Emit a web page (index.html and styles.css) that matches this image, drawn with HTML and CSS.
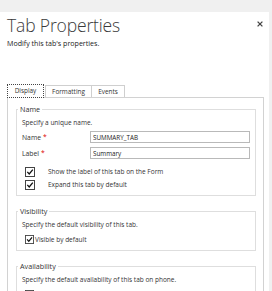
FILE: index.html
```html
<!DOCTYPE html>
<html lang="en">
<head>
<meta charset="utf-8">
<title>Tab Properties</title>
<link rel="stylesheet" href="styles.css">
</head>
<body>
<div class="topbar"></div>
<div class="main">
  <div class="dialog">
    <div class="header">
      <div class="titles">
        <h1 class="title">Tab Properties</h1>
        <p class="subtitle">Modify this tab's properties.</p>
      </div>
      <svg class="close" viewBox="0 0 6 6" width="6" height="6" aria-label="Close">
        <path d="M0.6 0.6 L5.4 5.4 M5.4 0.6 L0.6 5.4" stroke="#444" stroke-width="1.3" fill="none"/>
      </svg>
    </div>
    <div class="tabs">
      <div class="tab active">Display</div>
      <div class="tab formatting">Formatting</div>
      <div class="tab events">Events</div>
    </div>
    <div class="panel">
      <fieldset class="group">
        <legend>Name</legend>
        <p class="hint">Specify a unique name.</p>
        <div class="field">
          <label class="field-label">Name<span class="req">*</span></label>
          <input class="text-input" type="text" value="SUMMARY_TAB">
        </div>
        <div class="field field-second">
          <label class="field-label">Label<span class="req">*</span></label>
          <input class="text-input" type="text" value="Summary">
        </div>
        <div class="check-row check-first">
          <svg class="checkbox" viewBox="0 0 10 10" width="10" height="10"><rect x="0.5" y="0.5" width="9" height="9" fill="#fff" stroke="#444"/><path d="M2.3 4.9 L4.2 7 L7.8 2.6" stroke="#111" stroke-width="1.3" fill="none"/></svg>
          <span>Show the label of this tab on the Form</span>
        </div>
        <div class="check-row">
          <svg class="checkbox" viewBox="0 0 10 10" width="10" height="10"><rect x="0.5" y="0.5" width="9" height="9" fill="#fff" stroke="#444"/><path d="M2.3 4.9 L4.2 7 L7.8 2.6" stroke="#111" stroke-width="1.3" fill="none"/></svg>
          <span>Expand this tab by default</span>
        </div>
      </fieldset>
      <fieldset class="group">
        <legend>Visibility</legend>
        <p class="hint">Specify the default visibility of this tab.</p>
        <div class="check-row check-tight">
          <svg class="checkbox small" viewBox="0 0 10 10" width="9" height="9"><rect x="0.5" y="0.5" width="9" height="9" fill="#fff" stroke="#444"/><path d="M2.3 4.9 L4.2 7 L7.8 2.6" stroke="#111" stroke-width="1.4" fill="none"/></svg>
          <span>Visible by default</span>
        </div>
      </fieldset>
      <fieldset class="group">
        <legend>Availability</legend>
        <p class="hint">Specify the default availability of this tab on phone.</p>
        <div class="check-row check-tight">
          <svg class="checkbox small" viewBox="0 0 10 10" width="9" height="9"><rect x="0.5" y="0.5" width="9" height="9" fill="#fff" stroke="#444"/><path d="M2.3 4.9 L4.2 7 L7.8 2.6" stroke="#111" stroke-width="1.4" fill="none"/></svg>
          <span>Available on phone</span>
        </div>
      </fieldset>
    </div>
  </div>
  <div class="scroll-strip"></div>
</div>
</body>
</html>
```
FILE: styles.css
```css
* { box-sizing: border-box; }

html, body {
  margin: 0;
  padding: 0;
}

body {
  width: 272px;
  height: 291px;
  overflow: hidden;
  background: #f0f0f0;
  font-family: "Open Sans", "Noto Sans", sans-serif;
  color: #262626;
}

.topbar {
  height: 12px;
  background: #f0f0f0;
}

.main {
  display: flex;
  height: 279px;
}

.dialog {
  width: 269px;
  background: #fff;
  overflow: hidden;
}

.scroll-strip {
  flex: 1;
  background: #f0f0f0;
}

.header {
  display: flex;
  justify-content: space-between;
  align-items: flex-start;
  padding: 3px 0 0 7px;
}

.title {
  margin: 0;
  font-size: 17.5px;
  font-weight: 300;
  line-height: 20px;
  letter-spacing: -0.15px;
  color: #3a3a3a;
}

.subtitle {
  margin: 4px 0 0;
  font-size: 7.1px;
  line-height: 9px;
  color: #222;
}

.close {
  display: block;
  margin: 6px 6px 0 0;
}

.tabs {
  display: flex;
  align-items: flex-end;
  margin-top: 36px;
  padding-left: 7px;
  height: 13px;
}

.tab {
  height: 12px;
  border: 1px solid #cfcfcf;
  border-bottom: none;
  font-size: 6.4px;
  line-height: 11px;
  text-align: center;
  color: #333;
  background: #fff;
}

.tab.active {
  position: relative;
  width: 37px;
  height: 14px;
  margin-bottom: -1px;
  margin-right: 1px;
  border: 1px dotted #444;
  line-height: 12px;
}

.tab.formatting {
  width: 47px;
}

.tab.events {
  width: 33px;
  border-left: none;
}

.panel {
  margin-left: 7px;
  width: 257px;
  height: 200px;
  border: 1px solid #d2d2d2;
  border-bottom: none;
  padding: 0 7px 0 8px;
  display: flex;
  flex-direction: column;
  gap: 11px;
}

.group {
  margin: 0;
  min-width: 0;
  border: 1px solid #dedede;
  padding: 5px 5px 4px 5px;
}

.group:first-child {
  margin-top: 7px;
}

.group legend {
  margin-left: -4px;
  padding: 0 2px;
  font-size: 7.2px;
  line-height: 8px;
  color: #333;
}

.hint {
  margin: 0;
  font-size: 6.5px;
  line-height: 9px;
  color: #333;
}

.field {
  display: flex;
  align-items: center;
  height: 12px;
  margin-top: 4px;
}

.field-second {
  margin-top: 4px;
}

.field-label {
  width: 68px;
  font-size: 6.8px;
  color: #333;
}

.req {
  color: #d00;
  margin-left: 2px;
  vertical-align: 1px;
}

.text-input {
  flex: 1;
  min-width: 0;
  height: 12px;
  margin: 0;
  padding: 0 2px;
  border: 1px solid #b9b9b9;
  border-radius: 0;
  font-family: "Open Sans", "Noto Sans", sans-serif;
  font-size: 6.3px;
  color: #222;
  outline: none;
}

.check-row {
  display: flex;
  align-items: center;
  gap: 13px;
  height: 13px;
  padding-left: 3px;
  font-size: 6.5px;
  color: #333;
}

.check-first {
  margin-top: 6px;
}

.check-tight {
  gap: 1px;
  margin-top: 4px;
}

.checkbox {
  display: block;
  flex: none;
}
```
